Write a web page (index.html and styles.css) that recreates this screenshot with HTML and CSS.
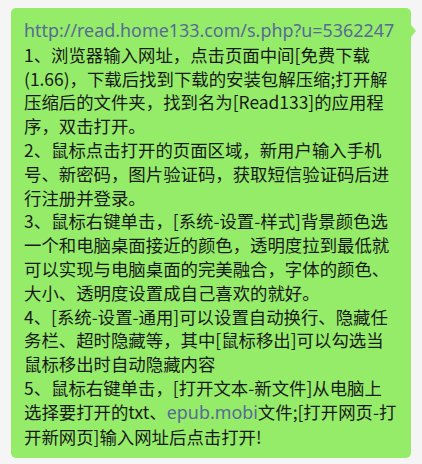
FILE: index.html
```html
<!DOCTYPE html>
<html lang="zh-CN">
<head>
  <meta charset="UTF-8" />
  <meta name="viewport" content="width=device-width, initial-scale=1.0"/>
  <title>消息</title>
  <link rel="stylesheet" href="styles.css">
</head>
<body>
  <div class="chat">
    <div class="bubble">
      <a class="link" href="#">http://read.home133.com/s.php?u=5362247</a><br>
      1、浏览器输入网址，点击页面中间[免费下载<br>
      (1.66)，下载后找到下载的安装包解压缩;打开解<br>
      压缩后的文件夹，找到名为[Read133]的应用程<br>
      序，双击打开。<br>
      2、鼠标点击打开的页面区域，新用户输入手机<br>
      号、新密码，图片验证码，获取短信验证码后进<br>
      行注册并登录。<br>
      3、鼠标右键单击，[系统-设置-样式]背景颜色选<br>
      一个和电脑桌面接近的颜色，透明度拉到最低就<br>
      可以实现与电脑桌面的完美融合，字体的颜色、<br>
      大小、透明度设置成自己喜欢的就好。<br>
      4、[系统-设置-通用]可以设置自动换行、隐藏任<br>
      务栏、超时隐藏等，其中[鼠标移出]可以勾选当<br>
      鼠标移出时自动隐藏内容<br>
      5、鼠标右键单击，[打开文本-新文件]从电脑上<br>
      选择要打开的txt、<a class="link" href="#">epub.mobi</a>文件;[打开网页-打<br>
      开新网页]输入网址后点击打开!
    </div>
  </div>
</body>
</html>
```

FILE: styles.css
```css
body {
  margin: 0;
  background-color: #f5f5f5;
  font-family: "Noto Sans CJK SC", "Noto Sans", sans-serif;
}
.chat {
  padding: 8px 11px 10px 11px;
}
.bubble {
  position: relative;
  width: 400px;
  box-sizing: border-box;
  padding: 10px 8px 10px 13px;
  background: #95ec69;
  border-radius: 5px;
  color: #191919;
  font-size: 17.4px;
  line-height: 23.8px;
  white-space: nowrap;
}
.bubble::after {
  content: "";
  position: absolute;
  right: -5px;
  top: 17px;
  border-top: 6px solid transparent;
  border-bottom: 6px solid transparent;
  border-left: 5px solid #95ec69;
}
.link {
  color: #576b95;
  text-decoration: none;
  font-family: "Noto Sans", "Noto Sans CJK SC", sans-serif;
  font-size: 17.9px;
}
```
